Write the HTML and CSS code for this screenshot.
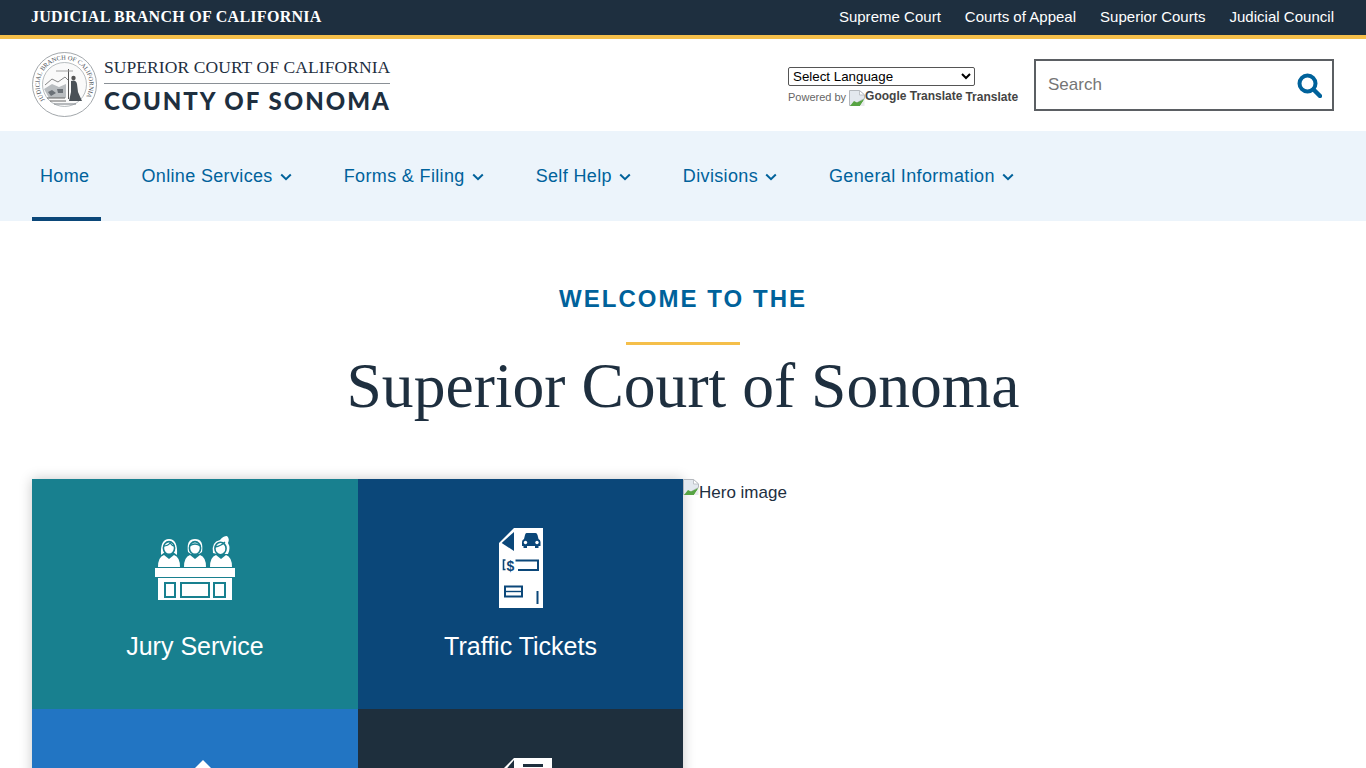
FILE: index.html
```html
<!DOCTYPE html>
<html lang="en">
<head>
  <meta charset="UTF-8">
  <title>Superior Court of California - County of Sonoma</title>
  <link rel="stylesheet" href="styles.css">
</head>
<body>
  <!-- top strip -->
  <div class="topbar">
    <a class="topbar-title" href="#">JUDICIAL BRANCH OF CALIFORNIA</a>
    <div class="topbar-links">
      <a href="#">Supreme Court</a>
      <a href="#">Courts of Appeal</a>
      <a href="#">Superior Courts</a>
      <a href="#">Judicial Council</a>
    </div>
  </div>

  <!-- logo, translate, search -->
  <header class="header">
    <a class="logo" href="#">
      <svg class="seal" width="65" height="65" viewBox="0 0 65 65">
        <defs><path id="seal-ring" d="M13 48 A24.9 24.9 0 1 1 52 48"/></defs>
        <circle cx="32.5" cy="32.5" r="32" fill="#fff" stroke="#8a9096" stroke-width=".8"/>
        <circle cx="32.5" cy="32.5" r="22" fill="#fafafa" stroke="#9aa0a5" stroke-width=".7"/>
        <text class="seal-text"><textPath href="#seal-ring">JUDICIAL BRANCH OF CALIFORNIA</textPath></text>
        <path d="M13 33 L20 27 L26 30 L33 25 L36 28" fill="none" stroke="#777" stroke-width=".9"/>
        <path d="M12 37 L20 32 L27 35 L34 32 V46 H17 Z" fill="#b9bdc0"/>
        <path d="M16 40 L20 38 L24 41 L19 44 Z M25 37 H31 V41 H26 Z" fill="#6b7177"/>
        <path d="M15 46 H33 M18 49 H34" stroke="#666" stroke-width="1"/>
        <path d="M36.5 17 V47" stroke="#555" stroke-width="1"/>
        <circle cx="41.5" cy="26" r="2.2" fill="#555"/>
        <path d="M39 29 Q44 27 45 32 L46 40 L50 49 H37 L39 40 Z" fill="#4a5157"/>
        <path d="M24 19 H41" stroke="#999" stroke-width=".9"/>
        <path d="M22 52 H44" stroke="#8a8f94" stroke-width="1.2"/>
      </svg>
      <span class="logo-text">
        <span class="logo-court">SUPERIOR COURT OF CALIFORNIA</span>
        <span class="logo-county">COUNTY OF SONOMA</span>
      </span>
    </a>
    <div class="header-tools">
      <div class="translate">
        <select class="translate-select"><option>Select Language</option></select>
        <div class="translate-powered">
          <span>Powered by</span>
          <svg class="broken-img" width="16" height="16" viewBox="0 0 16 16"><use href="#broken"/></svg>
          <b class="translate-alt">Google Translate</b>
          <b class="translate-word">Translate</b>
        </div>
      </div>
      <form class="search">
        <input class="search-input" type="text" placeholder="Search">
        <svg class="search-icon" width="25" height="25" viewBox="0 0 25 25">
          <circle cx="10.5" cy="10.5" r="8" fill="none" stroke="#00629b" stroke-width="4"/>
          <path d="M16.5 16.5 L23 23" stroke="#00629b" stroke-width="4.4" stroke-linecap="round"/>
        </svg>
      </form>
    </div>
  </header>

  <nav class="nav">
    <a class="nav-item active" href="#">Home</a>
    <a class="nav-item" href="#">Online Services <svg class="chev" width="12" height="8" viewBox="0 0 12 8"><path d="M1.2 1.5 L6 6.2 L10.8 1.5"/></svg></a>
    <a class="nav-item" href="#">Forms &amp; Filing <svg class="chev" width="12" height="8" viewBox="0 0 12 8"><path d="M1.2 1.5 L6 6.2 L10.8 1.5"/></svg></a>
    <a class="nav-item" href="#">Self Help <svg class="chev" width="12" height="8" viewBox="0 0 12 8"><path d="M1.2 1.5 L6 6.2 L10.8 1.5"/></svg></a>
    <a class="nav-item" href="#">Divisions <svg class="chev" width="12" height="8" viewBox="0 0 12 8"><path d="M1.2 1.5 L6 6.2 L10.8 1.5"/></svg></a>
    <a class="nav-item" href="#">General Information <svg class="chev" width="12" height="8" viewBox="0 0 12 8"><path d="M1.2 1.5 L6 6.2 L10.8 1.5"/></svg></a>
  </nav>

  <section class="welcome">
    <p class="welcome-small">WELCOME TO THE</p>
    <div class="welcome-rule"></div>
    <h1 class="welcome-title">Superior Court of Sonoma</h1>
  </section>

  <section class="hero">
    <div class="tiles">
      <a class="tile tile-teal" href="#">
        <span class="tile-icon-box">
          <svg width="81" height="65" viewBox="0 0 81 65">
            <rect x="0" y="32" width="80" height="9" fill="#fff"/>
            <rect x="3" y="42" width="74" height="22" fill="#fff"/>
            <g fill="none" stroke="#18808f" stroke-width="2">
              <rect x="10" y="47" width="10" height="14"/>
              <rect x="26" y="47" width="28" height="14"/>
              <rect x="59" y="47" width="11" height="14"/>
            </g>
            <path d="M3 31 Q3 21 9 19 L14 23 L19 19 Q25 21 25 31 Z" fill="#fff"/>
            <path d="M6 19 Q5 3 14 3 Q23 3 22 19 L18 16 H10 Z" fill="#fff"/>
            <ellipse cx="14" cy="12" rx="5.6" ry="6.4" fill="#fff" stroke="#18808f" stroke-width="1.6"/>
            <path d="M8.5 10 Q13 10 15 7 Q17 10 19.5 10" fill="none" stroke="#18808f" stroke-width="1.3"/>
            <path d="M29 31 Q29 21 35 19 L40 23 L45 19 Q51 21 51 31 Z" fill="#fff"/>
            <path d="M33 16 Q31 3 40 3 Q49 3 47 16 L44 18 H36 Z" fill="#fff"/>
            <ellipse cx="40" cy="12" rx="5.6" ry="6.4" fill="#fff" stroke="#18808f" stroke-width="1.6"/>
            <path d="M34.5 10 Q40 6 45.5 10" fill="none" stroke="#18808f" stroke-width="1.3"/>
            <path d="M55 31 Q55 21 61 19 L66 23 L71 19 Q77 21 77 31 Z" fill="#fff"/>
            <path d="M58 17 Q56 6 65 4 Q68 0 72 0 Q75 3 73 7 Q76 12 73 18 L70 18 H62 Z" fill="#fff"/>
            <ellipse cx="65.5" cy="12.5" rx="5.6" ry="6.2" fill="#fff" stroke="#18808f" stroke-width="1.6"/>
            <path d="M60 11 Q66 10 70 6" fill="none" stroke="#18808f" stroke-width="1.3"/>
          </svg>
        </span>
        <span class="tile-label">Jury Service</span>
      </a>
      <a class="tile tile-navy" href="#">
        <span class="tile-icon-box">
          <svg width="44" height="80" viewBox="0 0 44 80">
            <path d="M15 0 H44 V80 H0 V15 Z" fill="#fff"/>
            <path d="M15 4 V23 L2.7 15 Z" fill="#0b4779"/>
            <path d="M27.5 5 H36.5 Q38 5 38.5 7 L39.5 11 Q41.5 12 41.5 14 V18 H39.5 V20 H36 V18 H28 V20 H24.5 V18 H23 V14 Q23 12 25 11 L26 7 Q26.5 5 27.5 5 Z" fill="#0b4779"/>
            <circle cx="26.5" cy="14.5" r="1.7" fill="#fff"/>
            <circle cx="38" cy="14.5" r="1.7" fill="#fff"/>
            <path d="M6.5 32 H4.5 V41.5 H6.5" fill="none" stroke="#0b4779" stroke-width="1.6"/>
            <text class="ticket-dollar" x="7.5" y="42.5">$</text>
            <path d="M16.5 32.5 H39 V42 H19" fill="none" stroke="#0b4779" stroke-width="2"/>
            <rect x="6" y="58.5" width="17" height="10" fill="none" stroke="#0b4779" stroke-width="2"/>
            <path d="M6 63.5 H23" stroke="#0b4779" stroke-width="1.4"/>
            <path d="M38.5 63 V76" stroke="#0b4779" stroke-width="2"/>
          </svg>
        </span>
        <span class="tile-label">Traffic Tickets</span>
      </a>
      <a class="tile tile-blue" href="#">
        <span class="tile-icon-box tile-icon-house">
          <svg width="40" height="40" viewBox="0 0 40 40">
            <path d="M20 0 L40 20 V40 H0 V20 Z" fill="#fff"/>
          </svg>
        </span>
      </a>
      <a class="tile tile-dark" href="#">
        <span class="tile-icon-box tile-icon-doc">
          <svg width="51" height="80" viewBox="0 0 51 80">
            <path d="M13 0 H51 V80 H0 V13 Z" fill="#fff"/>
            <path d="M13 2 V15 H2 Z" fill="#1e2f3d"/>
            <path d="M22 6 H42 V9 H22 Z" fill="#1e2f3d"/>
          </svg>
        </span>
      </a>
    </div>
    <div class="hero-image">
      <svg class="broken-img" width="16" height="16" viewBox="0 0 16 16"><use href="#broken"/></svg><span>Hero image</span>
    </div>
  </section>

  <!-- shared broken picture glyph -->
  <svg class="defs" width="0" height="0">
    <symbol id="broken" viewBox="0 0 16 16">
      <path d="M.5 .5 H10.5 L15.5 5 V8.5 L3 15.5 H.5 Z" fill="#e3e8ee" stroke="#b4b8bd" stroke-width="1"/>
      <path d="M10.5 .5 V5 H15.5 Z" fill="#fff" stroke="#b4b8bd" stroke-width=".8"/>
      <path d="M1 16 L5 11 L8 12.5 L15.5 9 L11 16 Z" fill="#57a443"/>
      <path d="M11 16 L15.5 9.5 V16 Z" fill="#e8eaec"/>
    </symbol>
  </svg>
</body>
</html>
```

FILE: styles.css
```css
* { box-sizing: border-box; }

html, body { margin: 0; padding: 0; }
body {
  font-family: "Liberation Sans", Arial, sans-serif;
  color: #1e2f3f;
  background: #fff;
}
a { text-decoration: none; color: inherit; }

/* top strip */
.topbar {
  display: flex;
  justify-content: space-between;
  align-items: center;
  height: 39px;
  padding: 0 32px 2px;
  background: #1e2f3f;
  border-bottom: 4px solid #f5bf4a;
  color: #fff;
}
.topbar-title {
  margin-left: -1px;
  font-family: "Liberation Serif", serif;
  font-size: 16px;
  font-weight: bold;
  letter-spacing: .28px;
}
.topbar-links { display: flex; gap: 24px; font-size: 15px; letter-spacing: .02px; }

/* header */
.header {
  display: flex;
  justify-content: space-between;
  align-items: center;
  height: 92px;
  padding: 0 32px;
}
.logo { display: flex; align-items: center; gap: 7px; }
.seal { display: block; margin-top: -1px; }
.seal-text { font-family: "Liberation Serif", serif; font-size: 6.4px; fill: #4a5056; }
.logo-text { display: flex; flex-direction: column; width: 286px; padding-top: 1px; }
.logo-court {
  font-family: "Liberation Serif", serif;
  font-size: 17.5px;
  line-height: 22px;
  letter-spacing: .08px;
  padding-bottom: 5px;
  border-bottom: 1px solid #8a9096;
  white-space: nowrap;
  color: #1e2f3f;
}
.logo-county {
  margin-top: 2px;
  font-family: Lato, sans-serif;
  font-weight: 900;
  font-size: 24px;
  line-height: 30px;
  letter-spacing: 2px;
  white-space: nowrap;
  color: #1e2f3f;
}

.header-tools { display: flex; align-items: center; gap: 16px; }
.translate { width: 230px; padding-top: 3px; }
.translate-select {
  display: block;
  width: 187px;
  height: 19px;
  font-family: "Liberation Sans", Arial, sans-serif;
  font-size: 13.33px;
  padding: 0;
  background: #fff;
  border: 1px solid #555;
  border-radius: 2px;
}
.translate-powered {
  display: flex;
  align-items: center;
  margin-top: 2px;
  font-size: 11px;
  color: #666;
  white-space: nowrap;
}
.translate-powered .broken-img { margin: 2px 0 0 3px; }
.translate-alt { font-size: 12px; color: #444; margin-top: -3px; }
.translate-word { font-size: 12px; color: #444; margin-left: 3px; }

.search {
  display: flex;
  align-items: center;
  justify-content: space-between;
  width: 300px;
  height: 52px;
  padding: 0 10px 0 12px;
  border: 2px solid #5b5f63;
}
.search-input {
  flex: 1;
  min-width: 0;
  border: 0;
  outline: 0;
  padding: 0;
  font-family: "Liberation Sans", Arial, sans-serif;
  font-size: 17px;
}
.search-input::placeholder { color: #757575; opacity: 1; }

/* main nav */
.nav {
  display: flex;
  gap: 32px;
  height: 90px;
  padding: 0 32px;
  background: #ecf4fb;
}
.nav-item {
  display: flex;
  align-items: center;
  gap: 7px;
  padding: 4px 12px 0 8px;
  font-size: 18px;
  letter-spacing: .35px;
  color: #00629b;
  border-bottom: 4px solid transparent;
}
.nav-item.active { border-bottom-color: #0b4779; }
.chev { fill: none; stroke: #00629b; stroke-width: 2; margin-top: 2px; }

/* welcome heading */
.welcome { text-align: center; padding-top: 64px; }
.welcome-small {
  margin: 0;
  font-size: 24px;
  line-height: 28px;
  font-weight: bold;
  letter-spacing: 2.04px;
  color: #00629b;
}
.welcome-rule {
  width: 114px;
  height: 3px;
  margin: 29px auto 0;
  background: #f5bf4a;
}
.welcome-title {
  margin: 7px 0 0;
  font-family: "Liberation Serif", serif;
  font-weight: normal;
  font-size: 63.6px;
  line-height: 68px;
  color: #1e2f3f;
}

/* tiles and picture */
.hero {
  display: grid;
  grid-template-columns: 651px 1fr;
  padding: 0 32px;
  margin-top: 59px;
}
.tiles {
  display: grid;
  grid-template-columns: 326px 325px;
  grid-auto-rows: 230px;
  box-shadow: 0 0 12px rgba(0, 0, 0, .22);
}
.tile {
  display: flex;
  flex-direction: column;
  align-items: center;
  padding-top: 49px;
  color: #fff;
}
.tile-teal { background: #18808f; }
.tile-navy { background: #0b4779; }
.tile-blue { background: #2275c3; }
.tile-dark { background: #1e2f3d; }
.tile-icon-box { display: flex; align-items: center; justify-content: center; height: 80px; }
.tile-icon-box svg { display: block; }
.tile-icon-house { align-items: flex-start; padding-top: 2px; margin-left: 16px; }
.tile-icon-doc { margin-left: 11px; }
.tile-label {
  margin-top: 23px;
  font-size: 25px;
  line-height: 30px;
}
.ticket-dollar { font-family: "Liberation Sans", sans-serif; font-size: 14px; font-weight: bold; fill: #0b4779; }

.hero-image { display: flex; align-items: flex-start; font-size: 17px; line-height: 28px; color: #1e2f3f; position: relative; z-index: 1; }
.broken-img { display: block; flex: none; }
.defs { position: absolute; }
```
